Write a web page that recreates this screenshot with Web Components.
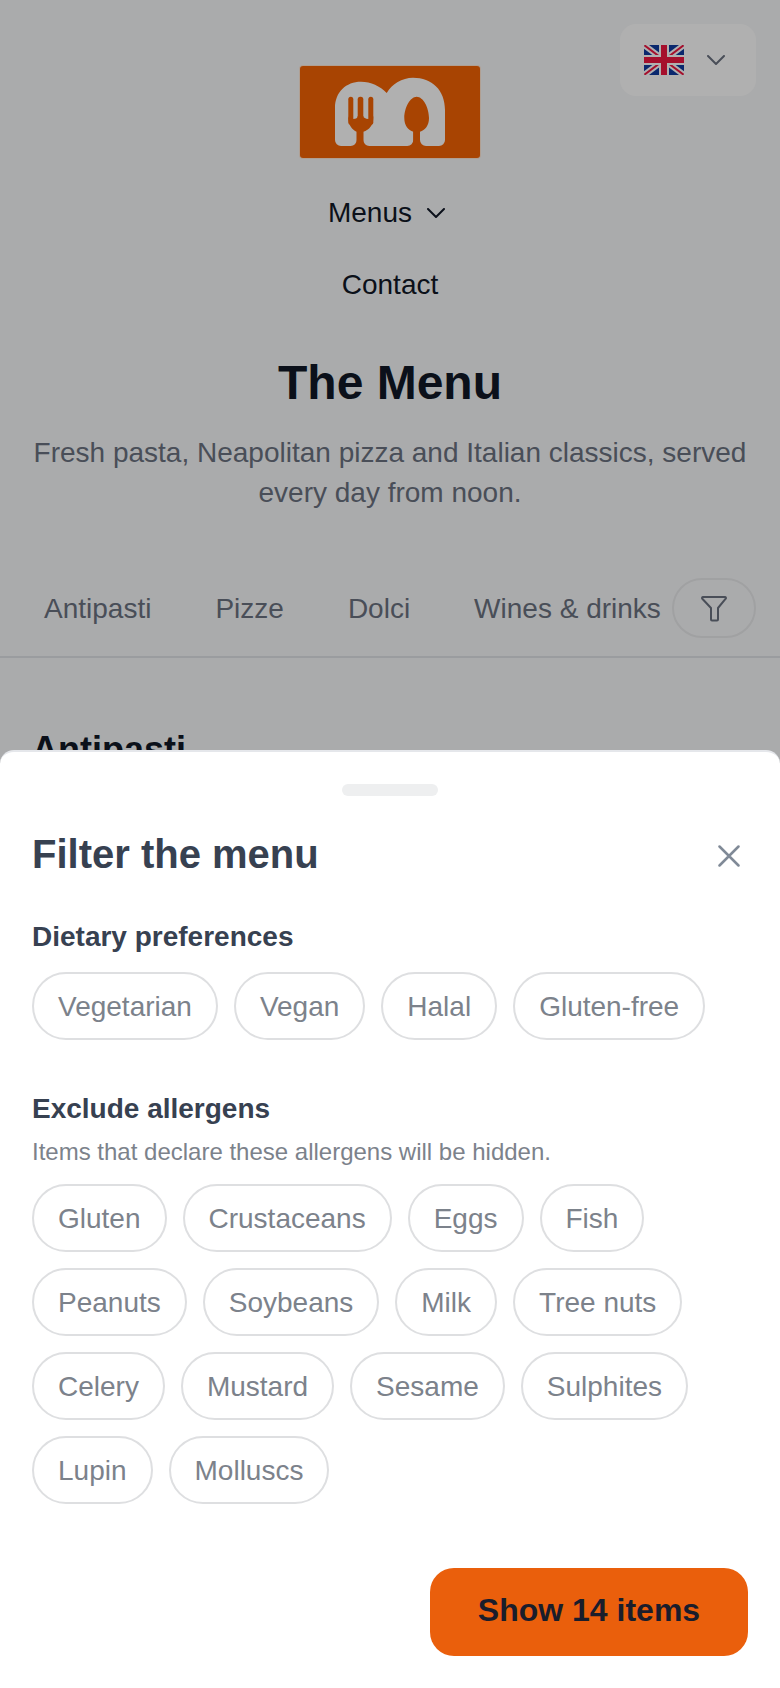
<!DOCTYPE html>
<html lang="en">
<head>
<meta charset="utf-8">
<title>The Menu</title>
<style>
  html, body { margin: 0; height: 1688px; overflow: hidden; }
  body { background: #f7f8fa; font-family: "Liberation Sans", Arial, sans-serif; color: #111827; }
</style>
</head>
<body>
<menu-page>
  <site-header></site-header>
  <menu-hero>
    <span slot="title">The Menu</span>
    Fresh pasta, Neapolitan pizza and Italian classics, served every day from noon.
  </menu-hero>
  <category-tabs>
    <a>Antipasti</a>
    <a>Pizze</a>
    <a>Dolci</a>
    <a>Wines &amp; drinks</a>
  </category-tabs>
  <section-title>Antipasti</section-title>
</menu-page>

<filter-sheet>
  <span slot="title">Filter the menu</span>
  <filter-group>
    <span slot="title">Dietary preferences</span>
    <filter-chip>Vegetarian</filter-chip>
    <filter-chip>Vegan</filter-chip>
    <filter-chip>Halal</filter-chip>
    <filter-chip>Gluten-free</filter-chip>
  </filter-group>
  <filter-group>
    <span slot="title">Exclude allergens</span>
    <span slot="hint">Items that declare these allergens will be hidden.</span>
    <filter-chip>Gluten</filter-chip>
    <filter-chip>Crustaceans</filter-chip>
    <filter-chip>Eggs</filter-chip>
    <filter-chip>Fish</filter-chip>
    <filter-chip>Peanuts</filter-chip>
    <filter-chip>Soybeans</filter-chip>
    <filter-chip>Milk</filter-chip>
    <filter-chip>Tree nuts</filter-chip>
    <filter-chip>Celery</filter-chip>
    <filter-chip>Mustard</filter-chip>
    <filter-chip>Sesame</filter-chip>
    <filter-chip>Sulphites</filter-chip>
    <filter-chip>Lupin</filter-chip>
    <filter-chip>Molluscs</filter-chip>
  </filter-group>
  <span slot="action">Show 14 items</span>
</filter-sheet>

<script>
function define(name, html) {
  const template = document.createElement('template');
  template.innerHTML = html;
  customElements.define(name, class extends HTMLElement {
    constructor() {
      super();
      this.attachShadow({ mode: 'open' });
      this.shadowRoot.appendChild(document.importNode(template.content, true));
    }
  });
}

const chevron = /* html */ `
  <svg width="18" height="10" viewBox="0 0 18 10" fill="none" stroke="currentColor" stroke-width="2" stroke-linecap="round" stroke-linejoin="round">
    <path d="M1 1l8 8 8-8"/>
  </svg>`;

define('menu-page', /* html */ `
  <style>
    :host { display: block; }
  </style>
  <slot></slot>
`);

define('site-logo', /* html */ `
  <style>
    :host { display: block; width: 182px; height: 94px; }
    svg { display: block; }
  </style>
  <svg width="182" height="94" viewBox="-1 -1 182 94">
    <rect x="-1" y="-1" width="182" height="94" rx="4" fill="#ffe6d4"/>
    <rect width="180" height="92" rx="3" fill="#f46304"/>
    <path fill="#fff" d="M35 42C35 26 46 15.7 61 15.7c10 0 19 4.3 25.7 11.3C92 18 102 11.7 113 11.7c19 0 32 12.3 32 32.3V74a6 6 0 0 1-6 6h-13a6 6 0 0 1-6-6V60h-6.700V74a6 6 0 0 1-6 6H69.300a6 6 0 0 1-6-6V60h-6.600V74a6 6 0 0 1-6 6H41a6 6 0 0 1-6-6Z"/>
    <g fill="#f46304">
      <rect x="48.300" y="30.700" width="5" height="28" rx="2.500"/>
      <rect x="57.700" y="30.700" width="5.600" height="28" rx="2.500"/>
      <rect x="68.300" y="30.700" width="5" height="28" rx="2.500"/>
      <path d="M48.300 50a4.700 3 0 0 0 9.400 0h5.600a5 3 0 0 0 10 0v2c0 7-4 12-10 13.700V80h-6.600V65.700C52.300 64 48.300 59 48.300 52Z"/>
      <path d="M116.700 30.700c6.500 0 12.300 11 12.300 21.300 0 7.500-4 12.500-9 13.700V80h-6.700V65.700c-5-1.200-9-6.200-9-13.700 0-10.300 5.900-21.300 12.400-21.300Z"/>
    </g>
  </svg>
`);

define('lang-picker', /* html */ `
  <style>
    :host { display: flex; align-items: center; box-sizing: border-box; width: 136px; height: 72px; padding-left: 24px; gap: 23px; background: #fff; border-radius: 16px; color: #6b7280; }
    svg { display: block; }
  </style>
  <svg width="40" height="30" viewBox="0 0 60 45">
    <clipPath id="flag"><rect width="60" height="45" rx="2"/></clipPath>
    <g clip-path="url(#flag)">
      <rect width="60" height="45" fill="#0f3aa0"/>
      <path d="M0 0l60 45M60 0L0 45" stroke="#fff" stroke-width="9"/>
      <path d="M0 0l60 45M60 0L0 45" stroke="#f01740" stroke-width="3"/>
      <path d="M30 0v45M0 22.500h60" stroke="#fff" stroke-width="15"/>
      <path d="M30 0v45M0 22.500h60" stroke="#f01740" stroke-width="9"/>
    </g>
  </svg>
  ${chevron}
`);

define('site-header', /* html */ `
  <style>
    :host { display: block; }
    .top { display: grid; grid-template-columns: 1fr 182px 1fr; }
    site-logo { margin-top: 65px; }
    lang-picker { justify-self: end; margin: 24px 24px 0 0; }
    nav { display: flex; flex-direction: column; align-items: center; gap: 40px; margin-top: 38px; font-size: 28px; line-height: 32px; color: #111827; }
    .menus { display: flex; align-items: center; gap: 15px; margin-left: -7px; }
  </style>
  <div class="top">
    <span></span>
    <site-logo></site-logo>
    <lang-picker></lang-picker>
  </div>
  <nav>
    <div class="menus">Menus ${chevron}</div>
    <div>Contact</div>
  </nav>
`);

define('menu-hero', /* html */ `
  <style>
    :host { display: block; padding: 0 24px; margin-top: 54px; text-align: center; }
    h1 { margin: 0; font-size: 48px; line-height: 56px; font-weight: 700; color: #111827; }
    p { margin: 22px 0 0; font-size: 28px; line-height: 40px; color: #6b7280; }
  </style>
  <h1><slot name="title"></slot></h1>
  <p><slot></slot></p>
`);

define('category-tabs', /* html */ `
  <style>
    :host { display: flex; align-items: center; box-sizing: border-box; height: 97px; margin-top: 48px; padding: 0 24px 0 12px; border-bottom: 2px solid #e0e2e6; }
    .tabs { flex: 1; display: flex; overflow: hidden; font-size: 28px; line-height: 32px; color: #6b7280; white-space: nowrap; }
    ::slotted(a) { padding: 0 32px; }
    button { flex: none; box-sizing: border-box; width: 84px; height: 60px; display: flex; align-items: center; justify-content: center; padding: 0; background: none; border: 2px solid #e8e9eb; border-radius: 30px; color: #6b7280; margin-bottom: 2px; }
    svg { display: block; }
  </style>
  <div class="tabs"><slot></slot></div>
  <button type="button">
    <svg width="30" height="30" viewBox="0 0 30 30" fill="none" stroke="currentColor" stroke-width="2" stroke-linecap="round" stroke-linejoin="round">
      <path d="M4 4h22a1 1 0 0 1 .700 1.700L19 15v11.500a1 1 0 0 1-1 1h-5a1 1 0 0 1-1-1V15L3.300 5.700A1 1 0 0 1 4 4Z"/>
    </svg>
  </button>
`);

define('section-title', /* html */ `
  <style>
    :host { display: block; padding: 0 32px; margin-top: 70px; font-size: 36px; line-height: 44px; font-weight: 700; color: #111827; }
  </style>
  <slot></slot>
`);

define('filter-chip', /* html */ `
  <style>
    :host { display: inline-flex; align-items: center; box-sizing: border-box; height: 68px; padding: 2px 24px 0; background: #fff; border: 2px solid #dedfe1; border-radius: 34px; font-size: 28px; color: #7c828b; white-space: nowrap; }
  </style>
  <slot></slot>
`);

define('filter-group', /* html */ `
  <style>
    :host { display: block; margin-bottom: 51px; }
    h3 { margin: 0; font-size: 28px; line-height: 36px; font-weight: 700; color: #374151; }
    .hint { display: block; font-size: 24px; line-height: 30px; margin-top: 10px; color: #7c828b; }
    .chips { display: flex; flex-wrap: wrap; gap: 16px; margin-top: 17px; }
  </style>
  <h3><slot name="title"></slot></h3>
  <slot name="hint" class="hint"></slot>
  <div class="chips"><slot></slot></div>
`);

define('filter-sheet', /* html */ `
  <style>
    :host { position: fixed; left: 0; right: 0; top: 0; bottom: 0; display: block; background: rgba(0, 0, 0, .31); }
    .panel { position: absolute; left: 0; right: 0; bottom: 0; height: 938px; box-sizing: border-box; padding: 32px 32px 0; background: #fff; border-top: 2px solid #e5e7eb; border-radius: 14px 14px 0 0; }
    .handle { width: 96px; height: 12px; margin: 0 auto; background: #eeeff0; border-radius: 6px; }
    header { display: flex; align-items: center; justify-content: space-between; margin-top: 32px; margin-bottom: 39px; }
    h2 { margin: 0; font-size: 40px; line-height: 52px; font-weight: 700; color: #374151; }
    .close { display: block; margin: 4px 8px 0 0; color: #808a97; }
    .action { display: flex; justify-content: flex-end; position: absolute; right: 32px; bottom: 32px; }
    button { height: 88px; width: 318px; padding: 0 0 4px; background: #ea5f0c; border: 0; border-radius: 24px; font: 700 32px "Liberation Sans", Arial, sans-serif; color: #1a1d2b; }
  </style>
  <div class="panel">
    <div class="handle"></div>
    <header>
      <h2><slot name="title"></slot></h2>
      <svg class="close" width="22" height="22" viewBox="0 0 22 22" fill="none" stroke="currentColor" stroke-width="2.500" stroke-linecap="round">
        <path d="M1.500 1.500l19 19M20.500 1.500l-19 19"/>
      </svg>
    </header>
    <slot></slot>
    <div class="action"><button type="button"><slot name="action"></slot></button></div>
  </div>
`);
</script>
</body>
</html>
